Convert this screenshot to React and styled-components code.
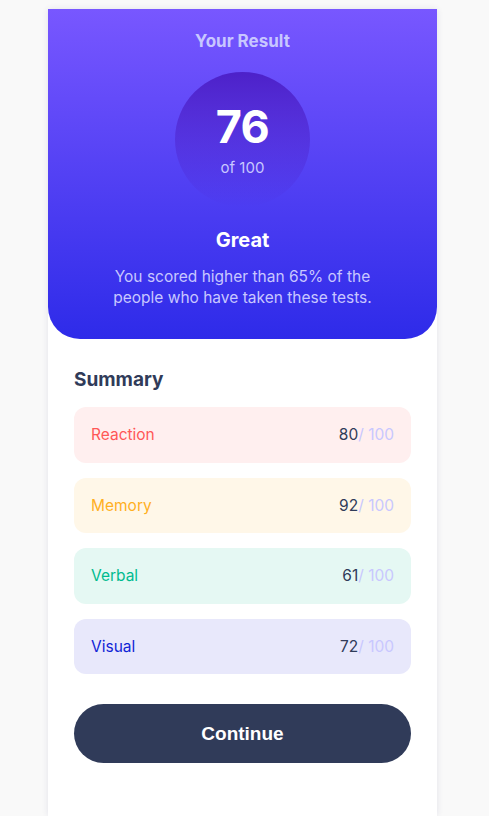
import React from "react";
import styled, { createGlobalStyle } from "styled-components";

const GlobalStyle = createGlobalStyle`
  html, body {
    margin: 0;
    padding: 0;
    background: #f9f9f9;
    font-family: "Inter", "Noto Sans", sans-serif;
  }
`;

const Page = styled.main`
  display: flex;
  justify-content: center;
  padding: 9px 52px 0 48px;
  min-height: 807px;
`;

const Card = styled.section`
  width: 389px;
  background: #fff;
  box-shadow: 0 0 6px rgba(60, 60, 120, 0.12);
  display: flex;
  flex-direction: column;
`;

const Result = styled.div`
  background: linear-gradient(to bottom, #7857ff, #2e2be9);
  border-radius: 0 0 32px 32px;
  display: flex;
  flex-direction: column;
  align-items: center;
  padding: 21px 40px 31px;
  text-align: center;
`;

const Heading = styled.h1`
  margin: 0;
  font-size: 17px;
  font-weight: 700;
  color: #c8c7ff;
  line-height: 22px;
`;

const Circle = styled.div`
  margin-top: 20px;
  width: 135px;
  height: 135px;
  border-radius: 50%;
  background: linear-gradient(to bottom, #4d21c9, rgba(37, 33, 201, 0));
  display: flex;
  flex-direction: column;
  align-items: center;
  justify-content: center;
`;

const Score = styled.span`
  font-size: 45px;
  font-weight: 700;
  color: #fff;
  line-height: 50px;
  margin-top: 0;
  letter-spacing: -0.5px;
`;

const Of = styled.span`
  font-size: 15px;
  color: #c8c7ff;
  margin-top: 6px;
`;

const Grade = styled.h2`
  margin: 21px 0 0;
  font-size: 20px;
  font-weight: 700;
  color: #fff;
`;

const Blurb = styled.p`
  margin: 14px 0 0;
  max-width: 285px;
  font-size: 15.5px;
  line-height: 21px;
  color: #c8c7ff;
`;

const Summary = styled.div`
  padding: 29px 26px 52px;
  display: flex;
  flex-direction: column;
`;

const SummaryTitle = styled.h3`
  margin: 0 0 16px;
  font-size: 19px;
  font-weight: 700;
  color: #303b59;
`;

const List = styled.ul`
  list-style: none;
  margin: 0;
  padding: 0;
  display: flex;
  flex-direction: column;
  gap: 15px;
`;

const Row = styled.li`
  height: 55.5px;
  border-radius: 12px;
  background: ${(p) => p.$bg};
  display: flex;
  align-items: center;
  justify-content: space-between;
  padding: 0 17px;
  font-size: 15.5px;
`;

const Label = styled.span`
  color: ${(p) => p.$color};
`;

const Value = styled.span`
  color: #303b59;
`;

const Max = styled.span`
  color: #c8c7ff;
`;

const Button = styled.button`
  margin-top: 30px;
  height: 59px;
  border: none;
  border-radius: 30px;
  background: #303b59;
  color: #fff;
  font-family: "Liberation Sans", Arial, sans-serif;
  font-size: 19px;
  font-weight: 700;
  cursor: pointer;
`;

const items = [
  { label: "Reaction", score: 80, color: "#ff5757", bg: "#ffefef" },
  { label: "Memory", score: 92, color: "#ffb01f", bg: "#fff7e8" },
  { label: "Verbal", score: 61, color: "#00bb8f", bg: "#e5f8f3" },
  { label: "Visual", score: 72, color: "#1125d6", bg: "#e8e8fb" },
];

const App = () => (
  <>
    <GlobalStyle />
    <Page>
      <Card>
        <Result>
          <Heading>Your Result</Heading>
          <Circle>
            <Score>76</Score>
            <Of>of 100</Of>
          </Circle>
          <Grade>Great</Grade>
          <Blurb>
            You scored higher than 65% of the people who have taken these tests.
          </Blurb>
        </Result>
        <Summary>
          <SummaryTitle>Summary</SummaryTitle>
          <List>
            {items.map((it) => (
              <Row key={it.label} $bg={it.bg}>
                <Label $color={it.color}>{it.label}</Label>
                <Value>
                  {it.score}
                  <Max>/ 100</Max>
                </Value>
              </Row>
            ))}
          </List>
          <Button>Continue</Button>
        </Summary>
      </Card>
    </Page>
  </>
);

export default App;
